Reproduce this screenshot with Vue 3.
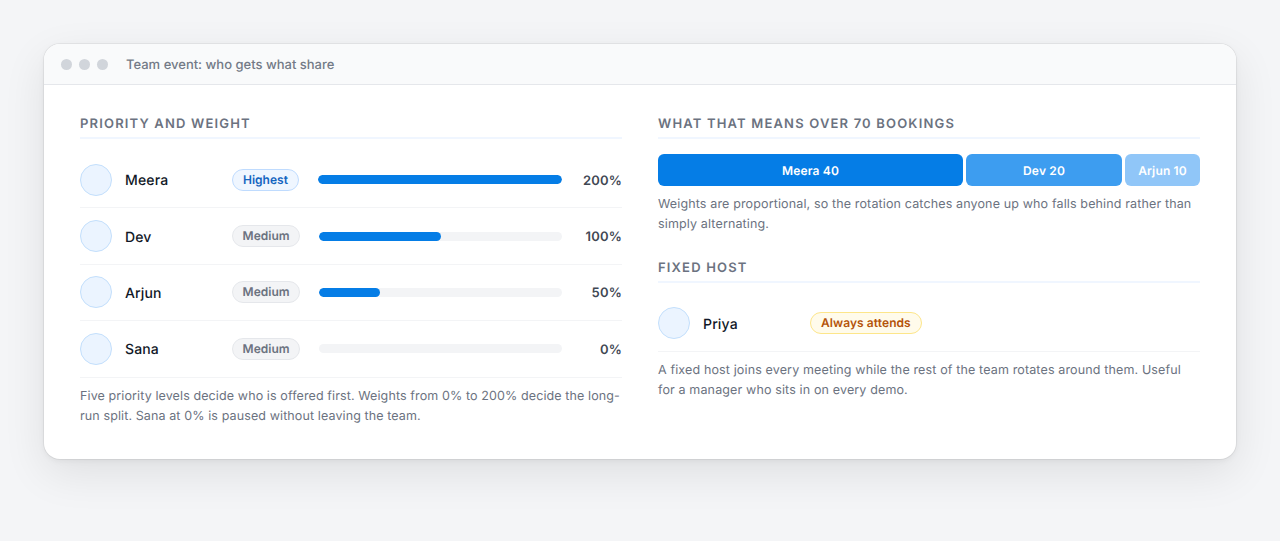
<template>
  <div class="page">
    <div class="window">
      <div class="titlebar">
        <span class="dot"></span>
        <span class="dot"></span>
        <span class="dot"></span>
        <span class="title">Team event: who gets what share</span>
      </div>
      <div class="content">
        <section class="col">
          <h3 class="heading">Priority and weight</h3>
          <div class="rows">
            <div v-for="m in members" :key="m.name" class="row">
              <span class="avatar"></span>
              <span class="name">{{ m.name }}</span>
              <span class="pill" :class="m.tone">{{ m.level }}</span>
              <span class="track">
                <span class="fill" :style="{ width: m.fill + '%' }"></span>
              </span>
              <span class="pct">{{ m.weight }}%</span>
            </div>
          </div>
          <p class="note tight">
            Five priority levels decide who is offered first. Weights from 0% to 200% decide the long-run split. Sana at 0% is paused without leaving the team.
          </p>
        </section>
        <section class="col">
          <h3 class="heading">What that means over 70 bookings</h3>
          <div class="split">
            <div v-for="s in shares" :key="s.name" class="share" :class="s.cls">{{ s.name }} {{ s.count }}</div>
          </div>
          <p class="note">
            Weights are proportional, so the rotation catches anyone up who falls behind rather than simply alternating.
          </p>
          <h3 class="heading second">Fixed host</h3>
          <div class="rows host">
            <div class="row">
              <span class="avatar"></span>
              <span class="name">Priya</span>
              <span class="pill amber">Always attends</span>
            </div>
          </div>
          <p class="note">
            A fixed host joins every meeting while the rest of the team rotates around them. Useful for a manager who sits in on every demo.
          </p>
        </section>
      </div>
    </div>
  </div>
</template>

<script setup>
const members = [
  { name: 'Meera', level: 'Highest', tone: 'blue', weight: 200, fill: 100 },
  { name: 'Dev', level: 'Medium', tone: 'grey', weight: 100, fill: 50 },
  { name: 'Arjun', level: 'Medium', tone: 'grey', weight: 50, fill: 25 },
  { name: 'Sana', level: 'Medium', tone: 'grey', weight: 0, fill: 0 },
]

const shares = [
  { name: 'Meera', count: 40, cls: 'strong' },
  { name: 'Dev', count: 20, cls: 'mid' },
  { name: 'Arjun', count: 10, cls: 'light' },
]
</script>

<style>
html,
body {
  margin: 0;
  background: #f4f5f7;
}
</style>

<style scoped>
.page {
  box-sizing: border-box;
  height: 541px;
  padding: 44px;
  overflow: hidden;
  font-family: Inter, "Liberation Sans", sans-serif;
  text-rendering: geometricPrecision;
}

.window {
  background: #fff;
  border-radius: 16px;
  box-shadow: 0 0 0 1px rgba(0, 0, 0, 0.05), 0 2px 6px rgba(0, 0, 0, 0.05), 0 14px 44px rgba(0, 0, 0, 0.09);
  overflow: hidden;
}

.titlebar {
  display: flex;
  align-items: center;
  gap: 7px;
  height: 40px;
  padding: 0 17px;
  background: #f9fafb;
  border-bottom: 1px solid #e5e7eb;
}

.dot {
  width: 11px;
  height: 11px;
  border-radius: 50%;
  background: #d1d5db;
}

.title {
  margin: 2px 0 0 11px;
  font-size: 13px;
  font-weight: 500;
  color: #737a87;
}

.content {
  display: grid;
  grid-template-columns: 1fr 1fr;
  gap: 36px;
  padding: 28px 36px 32px;
}

.col {
  min-width: 0;
}

.heading {
  margin: 0;
  padding: 1px 0 3px;
  font-size: 13px;
  line-height: 20px;
  font-weight: 600;
  letter-spacing: 1.17px;
  text-transform: uppercase;
  color: #6b7280;
  border-bottom: 2px solid #f0f6ff;
}

.heading.second {
  margin-top: 22px;
}

.rows {
  margin-top: 13px;
}

.rows.host {
  margin-top: 12px;
}

.row {
  display: flex;
  align-items: center;
  gap: 13px;
  height: 56.4px;
  box-sizing: border-box;
  border-bottom: 1px solid #f3f4f6;
}

.host .row {
  height: 57px;
}

.avatar {
  flex: none;
  box-sizing: border-box;
  width: 32px;
  height: 32px;
  border-radius: 50%;
  background: #ebf4ff;
  border: 1px solid #c3dffc;
}

.name {
  flex: none;
  width: 94px;
  margin-top: 2px;
  font-size: 14px;
  font-weight: 500;
  letter-spacing: 0.15px;
  color: #111827;
}

.pill {
  flex: none;
  box-sizing: border-box;
  height: 22px;
  line-height: 20px;
  padding: 0 10px;
  border: 1px solid;
  border-radius: 999px;
  font-size: 12px;
  font-weight: 600;
}

.pill.blue {
  background: #eff6ff;
  border-color: #bfdbfe;
  color: #1565c0;
}

.pill.grey {
  padding: 0 9.6px;
  background: #f3f4f6;
  border-color: #e5e7eb;
  color: #6b7280;
}

.pill.amber {
  background: #fffbeb;
  border-color: #fde68a;
  color: #b45309;
  letter-spacing: 0.08px;
}

.track {
  flex: 1;
  height: 9px;
  margin-left: 6px;
  border-radius: 999px;
  background: #f3f4f6;
  overflow: hidden;
}

.fill {
  display: block;
  height: 100%;
  border-radius: 999px;
  background: #057de6;
}

.pct {
  flex: none;
  width: 47px;
  margin-top: 2px;
  text-align: right;
  font-size: 13px;
  font-weight: 600;
  letter-spacing: 0.2px;
  color: #3f4753;
}

.note {
  margin: 9px 0 0;
  font-size: 12.5px;
  line-height: 20px;
  letter-spacing: 0.14px;
  color: #6b7280;
}

.note.tight {
  letter-spacing: 0.11px;
}

.split {
  display: grid;
  grid-template-columns: 305px 156px 1fr;
  gap: 3px;
  height: 32px;
  margin-top: 15px;
}

.share {
  display: flex;
  align-items: center;
  justify-content: center;
  border-radius: 6px;
  font-size: 12px;
  font-weight: 600;
  letter-spacing: 0.15px;
  color: #fff;
}

.strong {
  background: #057de6;
}

.mid {
  background: #3d9df0;
}

.light {
  background: #90c6f8;
}
</style>
